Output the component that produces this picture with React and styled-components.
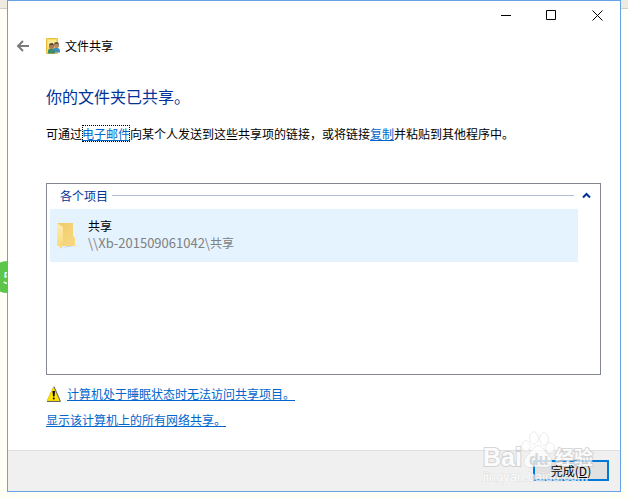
import React, {useState} from 'react'
import styled, {createGlobalStyle} from 'styled-components'


const GlobalStyle = createGlobalStyle`
* {
  box-sizing: border-box;
}
body {
  margin: 0;
  background-color: #fffff6;
  font-family: "Noto Sans CJK SC", "Noto Sans", sans-serif;
  font-size: 12px;
  line-height: 18px;
  color: #000;
}
`

const Desktop = styled.div`
position: relative;
display: flex;
min-height: 100vh;
padding: 0 7px 7px;
overflow: hidden;
background: linear-gradient(#eeebe0 0 8px, #cfcdc6 8px 9px, #fffff6 9px);
`

const StepBadge = styled.span`
position: absolute;
left: -9px;
top: 261px;
width: 32px;
height: 32px;
border-radius: 50%;
padding-left: 12px;
background-color: #5cc64a;
color: #fff;
font-size: 16px;
line-height: 32px;
`

const Window = styled.main`
position: relative;
flex: 1;
display: flex;
flex-direction: column;
min-width: 0;
border: 1px solid #66a3e6;
background-color: #fff;
`

const TitleBar = styled.div`
display: flex;
justify-content: flex-end;
height: 28px;
`

const CaptionButton = styled.button`
width: 46px;
padding: 0;
border: none;
background: none;
display: grid;
place-items: center;
&:hover {
  background-color: #e5e5e5;
}
`

const NavRow = styled.header`
display: flex;
align-items: center;
height: 34px;
padding-left: 8px;
`

const BackButton = styled.button`
display: flex;
width: 30px;
padding: 0;
border: none;
background: none;
`

const NavTitle = styled.span`
padding-left: 3px;
`

const Content = styled.section`
flex: 1;
display: flex;
flex-direction: column;
padding: 21px 19px 21px 38px;
`

const Heading = styled.h1`
margin: 0;
font-size: 16px;
font-weight: 400;
line-height: 24px;
color: #003399;
`

const Message = styled.p`
margin: 17px 0 40px;
`

const TextLink = styled.a`
color: #0066cc;
text-decoration: underline;
outline: ${(props) => (props.$focused ? '1px dotted #000' : 'none')};
outline-offset: -1px;
`

const ItemList = styled.div`
flex: 1;
padding: 1px 3px;
border: 1px solid #828790;
`

const GroupHeader = styled.div`
display: flex;
align-items: center;
height: 24px;
padding: 0 6px 3px 10px;
color: #003399;
`

const GroupName = styled.h2`
margin: 0;
font-size: 12px;
font-weight: 400;
`

const GroupLine = styled.hr`
flex: 1;
height: 1px;
margin: 0 8px 0 4px;
border: none;
background-color: #b0bdd6;
`

const CollapseButton = styled.button`
display: flex;
padding: 0;
border: none;
background: none;
`

const Item = styled.div`
display: flex;
align-items: center;
height: 53px;
margin-right: 19px;
padding-left: 5px;
gap: 10px;
background-color: #e5f3ff;
`

const ItemText = styled.div`
padding-bottom: 3px;
line-height: 17px;
`

const ItemPath = styled.div`
color: #808080;
`

const HostName = styled.span`
font-size: 13px;
`

const LinkRow = styled.div`
display: flex;
align-items: center;
gap: 5px;
margin-top: ${(props) => (props.$first ? '10px' : '8px')};
`

const Footer = styled.footer`
display: flex;
justify-content: flex-end;
padding: 9px 11px 10px;
border-top: 1px solid #dfdfdf;
background-color: #f0f0f0;
`

const DoneButton = styled.button`
width: 76px;
height: 21px;
padding: 0;
border: 2px solid #0078d7;
background-color: #e1e1e1;
font: inherit;
line-height: 17px;
color: #000;
`

// keeps the label readable above the watermark
const DoneLabel = styled.span`
position: relative;
z-index: 1;
`

const Watermark = styled.svg`
position: absolute;
right: 24px;
bottom: 0;
pointer-events: none;
font-family: "Liberation Sans", "Noto Sans CJK SC", sans-serif;
font-weight: 700;
`

const BackIcon = () => (
  <svg width="14" height="14" viewBox="0 0 14 14" fill="none" stroke="#7b7b7b" strokeWidth="2">
    <path d="M13 7H2M7 2L2 7l5 5" />
  </svg>
)

const SharedFolderIcon = () => (
  <svg width="16" height="16" viewBox="0 0 16 16">
    <path d="M.5 .5h11v15H.5z" fill="#f7dc6b" stroke="#e8bd3c" />
    <path d="M2 2h8v6H2z" fill="#fbe88f" />
    <path d="M7 14.500V12q0-2.500 3-2.500t4 2.500v2.500z" fill="#3d8fc4" />
    <circle cx="10.500" cy="7.500" r="2.500" fill="#b98a62" />
    <path d="M8 7q0-3 2.500-3T13 7l-1-1H9z" fill="#6c563c" />
    <path d="M2 15.500V13q0-2.500 3-2.500t4 2.500v2.500z" fill="#3c8c6c" />
    <circle cx="5.500" cy="8.500" r="2.500" fill="#a97a54" />
    <path d="M3 8q0-3 2.500-3T8 8L7 7H4z" fill="#4d493f" />
  </svg>
)

const FolderIcon = () => (
  <svg width="23" height="32" viewBox="0 0 23 32">
    <defs>
      <linearGradient id="folderBack" x1="0" y1="0" x2="1" y2="1">
        <stop offset="0" stopColor="#eecb6a" />
        <stop offset="1" stopColor="#f8da82" />
      </linearGradient>
      <linearGradient id="folderFront" x1="0" y1="0" x2="0" y2="1">
        <stop offset="0" stopColor="#ffedb0" />
        <stop offset="1" stopColor="#fbd774" />
      </linearGradient>
    </defs>
    <path d="M7 28l13-2 1-1-4-1z" fill="#c9d6de" />
    <path d="M2 3h16v13l2 2v8H7z" fill="url(#folderBack)" />
    <path d="M2 3l6 4v15l-1 1v6l-5-4z" fill="url(#folderFront)" />
  </svg>
)

const WarningIcon = () => (
  <svg width="16" height="18" viewBox="0 0 16 18">
    <path d="M7.500 2L14 16H1z" fill="#ffe600" stroke="#e3c60c" strokeLinejoin="round" />
    <path d="M8 1.500l6.500 15H1" fill="none" stroke="#666" strokeLinejoin="round" />
    <path d="M6.500 6h2.500l-.5 5.500H7z" fill="#000" />
    <circle cx="7.750" cy="13.500" r="1" fill="#000" />
  </svg>
)

const BaiduMark = () => (
  <Watermark width="114" height="62" viewBox="0 0 114 62" aria-hidden="true">
    <g fill="#fff" stroke="#cacaca" opacity="0.75" paintOrder="stroke">
      <text x="1" y="37" fontSize="25" strokeWidth="2">Bai</text>
      <ellipse cx="44" cy="17" rx="4" ry="5" />
      <ellipse cx="52" cy="9" rx="4" ry="6" />
      <ellipse cx="62" cy="10" rx="4" ry="6" />
      <ellipse cx="68" cy="19" rx="4" ry="5" />
      <path d="M56 17c5 0 6 5 10 9 6 5 4 12-2 12-5 0-10-1-15 0-7 1-9-6-4-11 5-4 6-10 11-10z" />
      <text x="73" y="36" fontSize="19" strokeWidth="2">经验</text>
      <text x="1" y="52" fontSize="13" fontWeight="400" stroke="#dcdcdc">jingyan.baidu.com</text>
    </g>
    <text x="47" y="36" fontSize="16" fill="#d6d6d6">du</text>
  </Watermark>
)

export default function App() {
  const [open, setOpen] = useState(true)

  return (
    <Desktop>
      <GlobalStyle />
      <StepBadge>5</StepBadge>
      <Window>
        <TitleBar>
          <CaptionButton aria-label="最小化">
            <svg width="11" height="11"><path d="M1 5.500h10" stroke="#000" /></svg>
          </CaptionButton>
          <CaptionButton aria-label="最大化">
            <svg width="11" height="11"><path d="M.5 .5h9v9h-9z" fill="none" stroke="#000" /></svg>
          </CaptionButton>
          <CaptionButton aria-label="关闭">
            <svg width="11" height="11"><path d="M.5 .5l10 10M10.500 .5l-10 10" stroke="#000" /></svg>
          </CaptionButton>
        </TitleBar>
        <NavRow>
          <BackButton aria-label="返回"><BackIcon /></BackButton>
          <SharedFolderIcon />
          <NavTitle>文件共享</NavTitle>
        </NavRow>
        <Content>
          <Heading>你的文件夹已共享。</Heading>
          <Message>
            可通过<TextLink href="#email" $focused>电子邮件</TextLink>向某个人发送到这些共享项的链接，或将链接<TextLink href="#copy">复制</TextLink>并粘贴到其他程序中。
          </Message>
          <ItemList>
            <GroupHeader>
              <GroupName>各个项目</GroupName>
              <GroupLine />
              <CollapseButton aria-label="折叠" aria-expanded={open} onClick={() => setOpen(!open)}>
                <svg width="9" height="7" fill="none" stroke="#003399" strokeWidth="2">
                  <path d="M1 5.500l3.500-3.500L8 5.500" />
                </svg>
              </CollapseButton>
            </GroupHeader>
            {open && (
              <Item>
                <FolderIcon />
                <ItemText>
                  <div>共享</div>
                  <ItemPath><HostName>{'\\\\Xb-201509061042\\'}</HostName>共享</ItemPath>
                </ItemText>
              </Item>
            )}
          </ItemList>
          <LinkRow $first>
            <WarningIcon />
            <TextLink href="#sleep">计算机处于睡眠状态时无法访问共享项目。</TextLink>
          </LinkRow>
          <LinkRow>
            <TextLink href="#shares">显示该计算机上的所有网络共享。</TextLink>
          </LinkRow>
        </Content>
        <Footer>
          <DoneButton><DoneLabel>完成(<u>D</u>)</DoneLabel></DoneButton>
        </Footer>
        <BaiduMark />
      </Window>
    </Desktop>
  )
}
